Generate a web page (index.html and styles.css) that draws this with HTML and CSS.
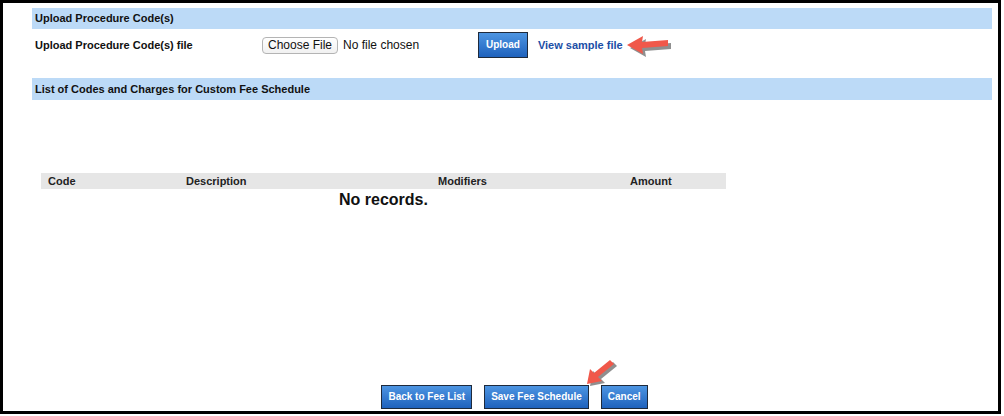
FILE: index.html
```html
<!DOCTYPE html>
<html lang="en">
<head>
    <meta charset="UTF-8">
    <title>Custom Fee Schedule</title>
    <link rel="stylesheet" href="styles.css">
</head>
<body>

<div class="frame">
    <div class="section-title">Upload Procedure Code(s)</div>
    <div class="upload-row">
        <label class="upload-label">Upload Procedure Code(s) file</label>
        <div class="file-input">
            <span class="choose-btn">Choose File</span>
            <span class="file-name">No file chosen</span>
        </div>
        <a class="btn upload-btn" href="#">Upload</a>
        <a class="sample-link" href="#">View sample file</a>
        <svg class="arrow arrow-left" width="50" height="26" viewBox="0 0 50 26">
            <g transform="translate(3,3)">
                <path d="M1 12 L17 3 L16 9 L42 7 L42 13 L16 15 L17 21 Z" fill="#333" opacity=".55"/>
            </g>
            <path d="M1 12 L17 3 L16 9 L42 7 L42 13 L16 15 L17 21 Z" fill="#f0584a"/>
        </svg>
    </div>

    <div class="section-title list-title">List of Codes and Charges for Custom Fee Schedule</div>

    <div class="codes-table">
        <div class="codes-head">
            <span>Code</span>
            <span>Description</span>
            <span>Modifiers</span>
            <span>Amount</span>
        </div>
        <div class="no-records">No records.</div>
    </div>

    <div class="actions">
        <a class="btn" href="#">Back to Fee List</a>
        <a class="btn" href="#">Save Fee Schedule</a>
        <a class="btn" href="#">Cancel</a>
        <svg class="arrow arrow-down" width="34" height="28" viewBox="0 0 34 28">
            <g transform="translate(3,2)">
                <path d="M1 25 L4 10 L8 14 L24 1 L28 5 L12 18 L16 22 Z" fill="#333" opacity=".55"/>
            </g>
            <path d="M1 25 L4 10 L8 14 L24 1 L28 5 L12 18 L16 22 Z" fill="#f0584a"/>
        </svg>
    </div>
</div>

</body>
</html>
```

FILE: styles.css
```css
html, body {
    margin: 0;
    padding: 0;
    background: #fff;
}

body {
    font-family: "Liberation Sans", Arial, sans-serif;
    color: #111;
}

a {
    text-decoration: none;
}

.frame {
    display: flex;
    flex-direction: column;
    width: 995px;
    height: 408px;
    border: 3px solid #000;
    position: relative;
}

.section-title {
    margin: 5px 6px 0 29px;
    height: 21px;
    line-height: 21px;
    padding-left: 3px;
    background: #bcdaf7;
    font-size: 11px;
    font-weight: bold;
    color: #111;
}

.list-title {
    margin-top: 17px;
    height: 22px;
    line-height: 22px;
}

.upload-row {
    display: flex;
    align-items: center;
    height: 32px;
    padding-left: 32px;
    position: relative;
}

.upload-label {
    width: 227px;
    font-size: 11px;
    font-weight: bold;
}

.file-input {
    display: flex;
    align-items: center;
    width: 216px;
}

.choose-btn {
    display: inline-block;
    height: 15px;
    line-height: 15px;
    padding: 0 5px;
    border: 1px solid #b4b4b4;
    border-radius: 4px;
    background: linear-gradient(#fff, #f1f1f1);
    font-size: 12px;
    color: #111;
}

.file-name {
    margin-left: 5px;
    font-size: 12px;
    color: #111;
}

.btn {
    display: inline-block;
    height: 22px;
    line-height: 22px;
    padding: 0 6px;
    border: 1px solid #1e2a3c;
    background: linear-gradient(#4d95e2, #1f62bd);
    color: #fff;
    font-size: 10px;
    font-weight: bold;
}

.upload-btn {
    height: 24px;
    line-height: 24px;
    padding: 0 7px;
}

.sample-link {
    margin-left: 10px;
    font-size: 11px;
    font-weight: bold;
    color: #1b4ea6;
}

.arrow {
    position: absolute;
}

.arrow-left {
    left: 623px;
    top: 4px;
}

.codes-table {
    margin: 73px 0 0 38px;
    width: 685px;
}

.codes-head {
    display: grid;
    grid-template-columns: 138px 252px 192px 1fr;
    height: 16px;
    line-height: 16px;
    padding-left: 7px;
    background: #e6e6e6;
    font-size: 11px;
    font-weight: bold;
    color: #222;
}

.no-records {
    text-align: center;
    font-size: 16px;
    font-weight: bold;
    line-height: 22px;
}

.actions {
    margin-top: auto;
    margin-bottom: 2px;
    display: flex;
    justify-content: center;
    gap: 12px;
    padding-left: 28px;
    position: relative;
}

.arrow-down {
    left: 583px;
    top: -26px;
}
```
